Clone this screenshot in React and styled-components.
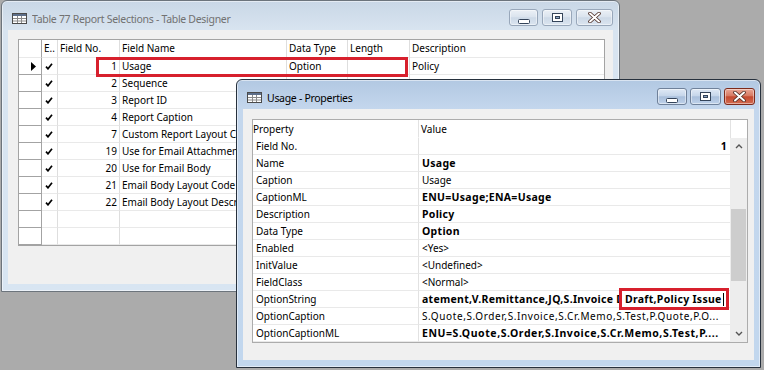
import styled, { createGlobalStyle } from 'styled-components';

const GlobalStyle = createGlobalStyle`
  html, body { margin: 0; padding: 0; }
  body {
    background: #ababab;
    font-family: "Noto Sans", "Open Sans", sans-serif;
    font-size: 10px;
    color: #000;
  }
`;

const designerRows = [
  { no: 1, name: 'Usage', type: 'Option', len: '', desc: 'Policy', current: true },
  { no: 2, name: 'Sequence', type: 'Code', len: '10', desc: '' },
  { no: 3, name: 'Report ID', type: 'Integer', len: '', desc: '' },
  { no: 4, name: 'Report Caption', type: 'Text', len: '250', desc: '' },
  { no: 7, name: 'Custom Report Layout Code', type: 'Code', len: '20', desc: '' },
  { no: 19, name: 'Use for Email Attachment', type: 'Boolean', len: '', desc: '' },
  { no: 20, name: 'Use for Email Body', type: 'Boolean', len: '', desc: '' },
  { no: 21, name: 'Email Body Layout Code', type: 'Code', len: '20', desc: '' },
  { no: 22, name: 'Email Body Layout Description', type: 'Text', len: '250', desc: '' },
  null,
  null,
];

const properties = [
  { name: 'Field No.', value: '1', bold: true, right: true },
  { name: 'Name', value: 'Usage', bold: true },
  { name: 'Caption', value: 'Usage' },
  { name: 'CaptionML', value: 'ENU=Usage;ENA=Usage', bold: true },
  { name: 'Description', value: 'Policy', bold: true },
  { name: 'Data Type', value: 'Option', bold: true },
  { name: 'Enabled', value: '<Yes>' },
  { name: 'InitValue', value: '<Undefined>' },
  { name: 'FieldClass', value: '<Normal>' },
  { name: 'OptionString', value: 'atement,V.Remittance,JQ,S.Invoice Draft,Policy Issue', bold: true, editing: 'Draft,Policy Issue' },
  { name: 'OptionCaption', value: 'S.Quote,S.Order,S.Invoice,S.Cr.Memo,S.Test,P.Quote,P.O...', spaced: true },
  { name: 'OptionCaptionML', value: 'ENU=S.Quote,S.Order,S.Invoice,S.Cr.Memo,S.Test,P....', bold: true, spaced: true },
];

const Desktop = styled.div`
  position: relative;
  width: 764px;
  height: 370px;
  overflow: hidden;
  background: #ababab;
`;

const Window = styled.div`
  position: absolute;
  left: ${p => p.$x}px;
  top: ${p => p.$y}px;
  width: ${p => p.$w}px;
  height: ${p => p.$h}px;
  box-sizing: border-box;
  display: flex;
  flex-direction: column;
  border: 1px solid ${p => (p.$active ? '#27313d' : '#6c747c')};
  border-radius: 6px 6px 0 0;
  background: ${p =>
    p.$active
      ? 'linear-gradient(180deg, #b2c8e2 0px, #c4d7ed 29px, #c2d7ee 100%)'
      : 'linear-gradient(180deg, #c9d7e6 0px, #d8e4f0 29px, #d8e5f2 100%)'};
  box-shadow: inset 0 0 0 1px rgba(255, 255, 255, 0.5);
`;

const TitleBar = styled.div`
  flex: none;
  height: 29px;
  display: flex;
  align-items: flex-start;
  padding: 0 ${p => p.$padRight}px 0 10px;
`;

const TitleIcon = styled.svg`
  flex: none;
  margin-top: 12px;
`;

const TitleText = styled.div`
  flex: 1;
  margin: 10px 0 0 5px;
  font-size: 10.5px;
  letter-spacing: -0.3px;
  line-height: 16px;
  white-space: nowrap;
  overflow: hidden;
  color: ${p => (p.$active ? '#000' : '#717171')};
`;

const Buttons = styled.div`
  display: flex;
  gap: ${p => p.$gap}px;
  margin-top: 8px;
`;

const CaptionButton = styled.div`
  box-sizing: border-box;
  width: ${p => p.$w}px;
  height: 17px;
  border-radius: 3px;
  display: flex;
  align-items: center;
  justify-content: center;
  border: 1px solid ${p => (p.$close && p.$active ? '#7d2a1b' : p.$active ? '#6f819a' : '#98a7ba')};
  box-shadow: inset 0 0 0 1px rgba(255, 255, 255, 0.45);
  background: ${p =>
    p.$close && p.$active
      ? 'linear-gradient(180deg, #eaa796 0%, #d77a63 45%, #c44a30 52%, #d36a4f 100%)'
      : p.$active
      ? 'linear-gradient(180deg, #dfe9f5 0%, #c6d6ea 45%, #a9bfdb 52%, #bfd2ea 100%)'
      : 'linear-gradient(180deg, #ebf0f6 0%, #dbe4ee 45%, #cdd9e7 52%, #dbe5f0 100%)'};
`;

const Frame = styled.div`
  flex: 1;
  display: flex;
  padding: 0 6px 7px;
  min-height: 0;
`;

const Client = styled.div`
  flex: 1;
  background: #f0f0f0;
  padding: ${p => p.$pad};
  min-width: 0;
`;

/* Table designer grid */
const DesignGrid = styled.div`
  position: relative;
  border: 1px solid #a3a3a3;
  background: #fff;
`;

const DesignRow = styled.div`
  display: grid;
  grid-template-columns: 23px 16px 62px 167px 61px 62px 1fr;
  height: ${p => (p.$head ? 18 : 17)}px;
`;

const Cell = styled.div`
  box-sizing: border-box;
  border-right: 1px solid #dedede;
  border-bottom: 1px solid #e9e9e9;
  padding: 0 2px;
  line-height: ${p => (p.$head ? 17 : 16)}px;
  text-align: ${p => (p.$right ? 'right' : 'left')};
  white-space: nowrap;
  overflow: hidden;
  &:last-child { border-right: none; }
`;

const Selector = styled.div`
  box-sizing: border-box;
  border-right: 1px solid #a3a3a3;
  border-bottom: 1px solid ${p => (p.$head ? '#e9e9e9' : '#a3a3a3')};
  display: flex;
  align-items: center;
  padding-left: 12px;
`;

const CheckCell = styled(Cell)`
  display: flex;
  align-items: center;
  padding-left: 3px;
`;

const RedMark = styled.div`
  position: absolute;
  box-sizing: border-box;
  left: ${p => p.$x}px;
  top: ${p => p.$y}px;
  width: ${p => p.$w}px;
  height: ${p => p.$h}px;
  border: 3px solid #d7202d;
  background: ${p => (p.$fill ? '#fff' : 'transparent')};
`;

/* Properties grid */
const PropTable = styled.div`
  display: flex;
  border: 1px solid #acacac;
  background: #fff;
`;

const PropGrid = styled.div`
  flex: 1;
  min-width: 0;
`;

const PropRow = styled.div`
  display: grid;
  grid-template-columns: 166px 1fr;
  height: ${p => (p.$head ? 18 : 17)}px;
`;

const PropName = styled.div`
  box-sizing: border-box;
  border-right: 1px solid #e2e2e2;
  border-bottom: 1px solid ${p => (p.$head ? 'transparent' : '#e9e9e9')};
  padding-left: ${p => (p.$head ? 0 : 3)}px;
  line-height: ${p => (p.$head ? 18 : 16)}px;
  white-space: nowrap;
  overflow: hidden;
`;

const PropValue = styled.div`
  position: relative;
  box-sizing: border-box;
  border-bottom: 1px solid ${p => (p.$head ? 'transparent' : '#e9e9e9')};
  padding: 0 3px 0 ${p => (p.$head ? 2 : 3)}px;
  line-height: ${p => (p.$head ? 18 : 16)}px;
  font-weight: ${p => (p.$bold ? 700 : 400)};
  font-size: ${p => (p.$bold ? 10.5 : 10)}px;
  letter-spacing: ${p => (p.$spaced ? (p.$bold ? 0.55 : 0.6) : p.$bold ? 0.3 : 0)}px;
  text-align: ${p => (p.$right ? 'right' : 'left')};
  white-space: nowrap;
  overflow: ${p => (p.$editing ? 'visible' : 'hidden')};
`;

const Clip = styled.div`
  max-width: 197px;
  overflow: hidden;
  white-space: nowrap;
`;

const EditText = styled.div`
  display: flex;
  align-items: center;
  height: 100%;
  padding-left: 3px;
  font-weight: 700;
  white-space: nowrap;
`;

const Caret = styled.span`
  width: 1px;
  height: 13px;
  margin-left: 1px;
  background: #000;
`;

const ScrollColumn = styled.div`
  flex: none;
  width: 17px;
  display: flex;
  flex-direction: column;
`;

const ScrollHead = styled.div`
  height: 18px;
  border-left: 1px solid #e2e2e2;
  background: #fff;
`;

const Track = styled.div`
  flex: 1;
  display: flex;
  flex-direction: column;
  background: #ededed;
`;

const ArrowButton = styled.div`
  height: 17px;
  display: flex;
  align-items: center;
  justify-content: center;
`;

const Thumb = styled.div`
  margin: ${p => p.$offset}px 1px 0;
  height: ${p => p.$size}px;
  background: #cdcdcd;
`;

const Spacer = styled.div`
  flex: 1;
`;

const TableIcon = () => (
  <TitleIcon width="15" height="11" viewBox="0 0 15 11">
    <rect x="0.5" y="0.5" width="14" height="10" fill="#fff" stroke="#4b4b4b" />
    <rect x="1" y="1" width="13" height="2" fill="#5d6f8a" />
    <path d="M1 5.5H14M1 8H14M5.5 3V10M9.5 3V10" stroke="#8a8a8a" strokeWidth="1" />
  </TitleIcon>
);

const MinGlyph = () => (
  <svg width="12" height="6" viewBox="0 0 12 6" style={{ marginTop: 6 }}>
    <rect x="0.5" y="1.5" width="11" height="4" rx="1" fill="#fff" stroke="#34445a" />
  </svg>
);

const MaxGlyph = () => (
  <svg width="11" height="9" viewBox="0 0 11 9">
    <rect x="0.5" y="0.5" width="10" height="8" fill="#fff" stroke="#34445a" />
    <rect x="3.5" y="3.5" width="4" height="2" fill="#8aa3c4" stroke="#34445a" />
  </svg>
);

const CloseGlyph = () => (
  <svg width="13" height="11" viewBox="0 0 13 11">
    <path d="M2 1.5L11 9.5M11 1.5L2 9.5" stroke="#4a2a22" strokeWidth="3.6" strokeLinecap="round" />
    <path d="M2 1.5L11 9.5M11 1.5L2 9.5" stroke="#fff" strokeWidth="2" strokeLinecap="round" />
  </svg>
);

const Check = () => (
  <svg width="8" height="7" viewBox="0 0 8 7">
    <path d="M1 3.6L3 5.8L7 0.8" fill="none" stroke="#000" strokeWidth="1.7" />
  </svg>
);

const Pointer = () => (
  <svg width="5" height="9" viewBox="0 0 5 9">
    <polygon points="0,0 5,4.5 0,9" fill="#000" />
  </svg>
);

const Chevron = ({ down }) => (
  <svg width="8" height="5" viewBox="0 0 8 5">
    <path d={down ? 'M1 1L4 4L7 1' : 'M1 4L4 1L7 4'} fill="none" stroke="#555" strokeWidth="1.4" />
  </svg>
);

const WindowChrome = ({ title, active, x, y, w, h, widths, gap, padRight, pad, children }) => (
  <Window $x={x} $y={y} $w={w} $h={h} $active={active}>
    <TitleBar $padRight={padRight}>
      <TableIcon />
      <TitleText $active={active}>{title}</TitleText>
      <Buttons $gap={gap}>
        <CaptionButton $w={widths[0]} $active={active}><MinGlyph /></CaptionButton>
        <CaptionButton $w={widths[1]} $active={active}><MaxGlyph /></CaptionButton>
        <CaptionButton $w={widths[2]} $active={active} $close><CloseGlyph /></CaptionButton>
      </Buttons>
    </TitleBar>
    <Frame>
      <Client $pad={pad}>{children}</Client>
    </Frame>
  </Window>
);

export default function App() {
  return (
    <>
      <GlobalStyle />
      <Desktop>
        <WindowChrome
          title="Table 77 Report Selections - Table Designer"
          x={1} y={0} w={619} h={292}
          widths={[29, 30, 37]} gap={4} padRight={6}
          pad="9px 8px 0 10px"
        >
          <DesignGrid>
            <DesignRow $head>
              <Selector $head />
              <Cell $head>E..</Cell>
              <Cell $head>Field No.</Cell>
              <Cell $head>Field Name</Cell>
              <Cell $head>Data Type</Cell>
              <Cell $head>Length</Cell>
              <Cell $head>Description</Cell>
            </DesignRow>
            {designerRows.map((r, i) => (
              <DesignRow key={i}>
                <Selector>{r && r.current && <Pointer />}</Selector>
                <CheckCell>{r && <Check />}</CheckCell>
                <Cell $right>{r ? r.no : ''}</Cell>
                <Cell>{r ? r.name : ''}</Cell>
                <Cell>{r ? r.type : ''}</Cell>
                <Cell $right>{r ? r.len : ''}</Cell>
                <Cell>{r ? r.desc : ''}</Cell>
              </DesignRow>
            ))}
            <RedMark $x={77} $y={17} $w={312} $h={20} />
          </DesignGrid>
        </WindowChrome>

        <WindowChrome
          title="Usage - Properties"
          active
          x={236} y={79} w={525} h={289}
          widths={[30, 31, 31]} gap={3} padRight={5}
          pad="10px 6px 0 9px"
        >
          <PropTable>
            <PropGrid>
              <PropRow $head>
                <PropName $head>Property</PropName>
                <PropValue $head>Value</PropValue>
              </PropRow>
              {properties.map(p => (
                <PropRow key={p.name}>
                  <PropName>{p.name}</PropName>
                  <PropValue $bold={p.bold} $right={p.right} $spaced={p.spaced} $editing={!!p.editing}>
                    {p.editing ? (
                      <>
                        <Clip>{p.value}</Clip>
                        <RedMark $x={200} $y={-3} $w={110} $h={22} $fill>
                          <EditText>
                            {p.editing}
                            <Caret />
                          </EditText>
                        </RedMark>
                      </>
                    ) : (
                      p.value
                    )}
                  </PropValue>
                </PropRow>
              ))}
            </PropGrid>
            <ScrollColumn>
              <ScrollHead />
              <Track>
                <ArrowButton><Chevron /></ArrowButton>
                <Thumb $offset={54} $size={72} />
                <Spacer />
                <ArrowButton><Chevron down /></ArrowButton>
              </Track>
            </ScrollColumn>
          </PropTable>
        </WindowChrome>
      </Desktop>
    </>
  );
}
